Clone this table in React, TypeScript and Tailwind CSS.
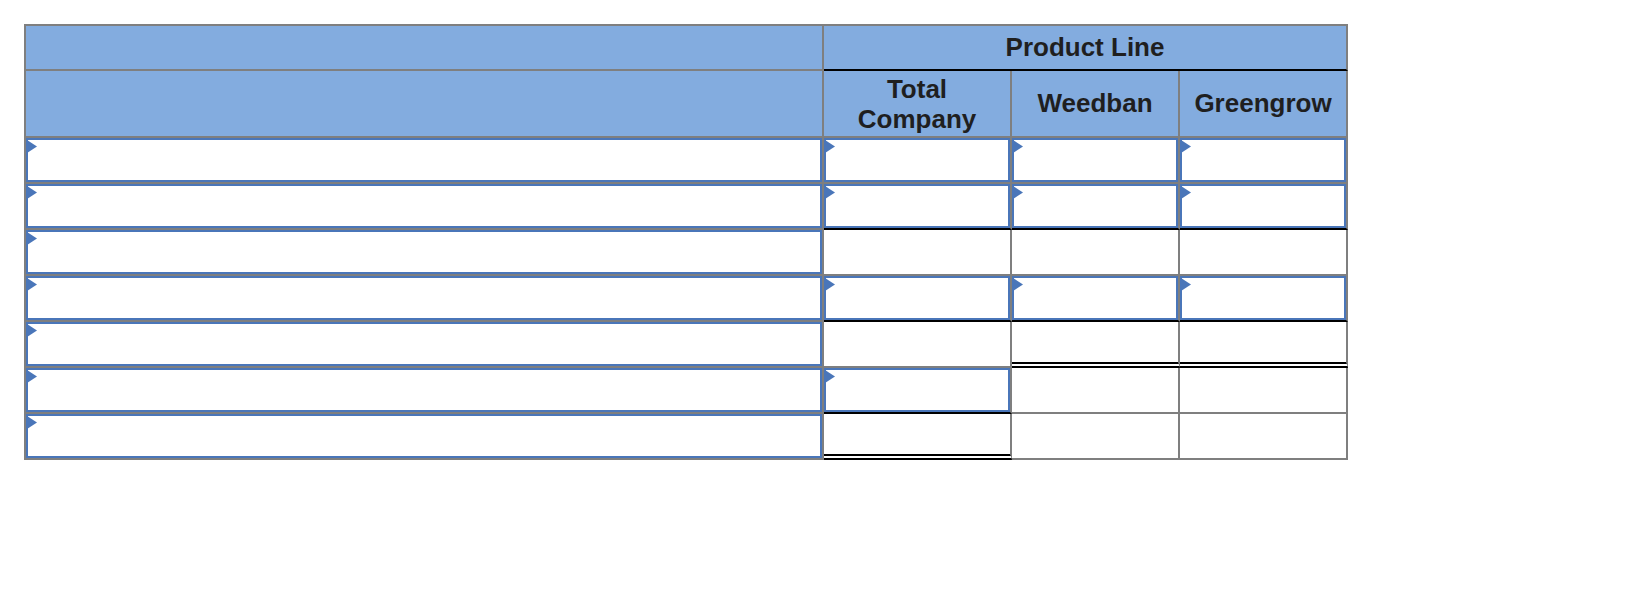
import React from "react";

// cell kinds: "in" = input box with marker, "" = plain white cell
// bottom edge: g = gray, k = black, d = double black
type Edge = "g" | "k" | "d";
type Row = { cells: ("in" | "")[]; bottom: Edge[] };

const ROWS: Row[] = [
  { cells: ["in", "in", "in", "in"], bottom: ["g", "g", "g", "g"] },
  { cells: ["in", "in", "in", "in"], bottom: ["g", "k", "k", "k"] },
  { cells: ["in", "", "", ""], bottom: ["g", "g", "g", "g"] },
  { cells: ["in", "in", "in", "in"], bottom: ["g", "k", "k", "k"] },
  { cells: ["in", "", "", ""], bottom: ["g", "g", "d", "d"] },
  { cells: ["in", "in", "", ""], bottom: ["g", "k", "g", "g"] },
  { cells: ["in", "", "", ""], bottom: ["g", "d", "g", "g"] },
];

const EDGE: Record<Edge, string> = {
  g: "border-b-2 border-b-[#7f7f7f]",
  k: "border-b-2 border-b-black",
  d: "border-b-[6px] border-b-black [border-bottom-style:double]",
};

const font = { fontFamily: '"Liberation Sans", Arial, sans-serif' };

const InputBox = () => (
  <div className="relative h-full w-full border-2 border-[#4a76b9] bg-white">
    <svg
      className="absolute -left-[1px] top-0"
      width="10"
      height="13"
      viewBox="0 0 10 13"
      aria-hidden
    >
      <polygon points="0,0 10,6.5 0,13" fill="#4a76b9" />
    </svg>
  </div>
);

const App = () => {
  return (
    <div className="min-h-[608px] w-full bg-white pl-[24px] pt-[24px]" style={font}>
      <div className="grid w-fit grid-cols-[798px_188px_168px_168px] border-l-2 border-t-2 border-l-[#7f7f7f] border-t-[#7f7f7f] text-[#1f1f1f]">
        {/* header row 1 */}
        <div className="h-[45px] border-r-2 border-b-2 border-r-[#7f7f7f] border-b-[#7f7f7f] bg-[#83acdf]" />
        <div className="col-span-3 flex h-[45px] items-center justify-center border-r-2 border-b-2 border-r-[#7f7f7f] border-b-black bg-[#83acdf] text-[26px] font-bold">
          Product Line
        </div>

        {/* header row 2 */}
        <div className="h-[67px] border-r-2 border-b-2 border-r-[#7f7f7f] border-b-[#7f7f7f] bg-[#83acdf]" />
        <div className="flex h-[67px] items-center justify-center border-r-2 border-b-2 border-r-[#7f7f7f] border-b-[#7f7f7f] bg-[#83acdf] text-center text-[26px] font-bold leading-[30px]">
          Total
          <br />
          Company
        </div>
        <div className="flex h-[67px] items-center justify-center border-r-2 border-b-2 border-r-[#7f7f7f] border-b-[#7f7f7f] bg-[#83acdf] text-[26px] font-bold">
          Weedban
        </div>
        <div className="flex h-[67px] items-center justify-center border-r-2 border-b-2 border-r-[#7f7f7f] border-b-[#7f7f7f] bg-[#83acdf] text-[26px] font-bold">
          Greengrow
        </div>

        {/* data rows */}
        {ROWS.map((row, r) =>
          row.cells.map((c, i) => (
            <div
              key={`${r}-${i}`}
              className={`h-[46px] border-r-2 border-r-[#7f7f7f] bg-white ${EDGE[row.bottom[i]]}`}
            >
              {c === "in" && <InputBox />}
            </div>
          ))
        )}
      </div>
    </div>
  );
};

export default App;
